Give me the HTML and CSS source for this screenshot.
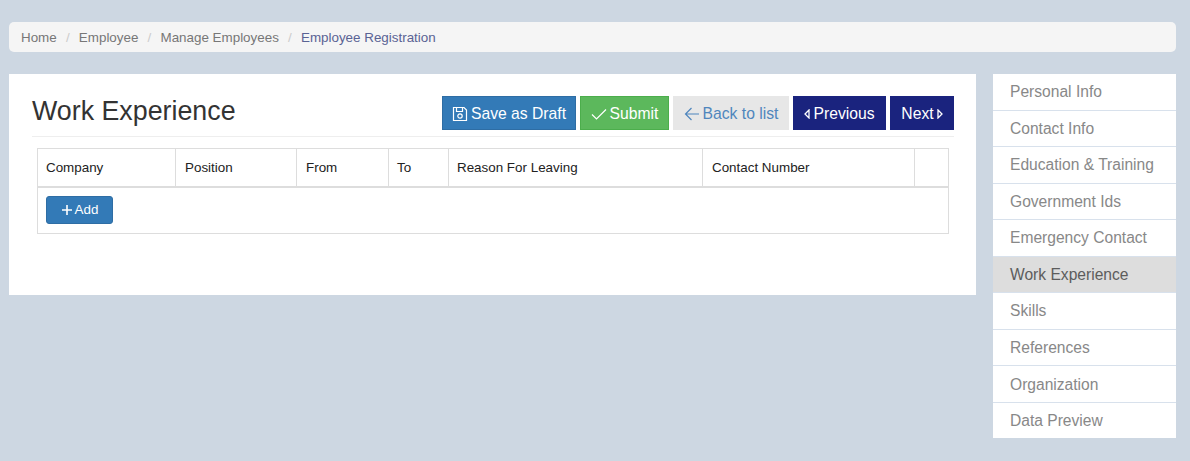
FILE: index.html
```html
<!DOCTYPE html>
<html lang="en">
<head>
    <meta charset="UTF-8">
    <meta name="viewport" content="width=device-width, initial-scale=1.0">
    <title>Employee Registration</title>
    <link rel="stylesheet" href="styles.css">
</head>
<body>

    <!-- Breadcrumb -->
    <ol class="breadcrumb">
        <li>Home</li>
        <li>Employee</li>
        <li>Manage Employees</li>
        <li class="current">Employee Registration</li>
    </ol>

    <div class="layout">
        <main class="panel">
            <div class="panel-head">
                <h1>Work Experience</h1>
                <div class="actions">
                    <button class="btn btn-blue">
                        <svg class="icon" viewBox="0 0 16 16"><path d="M1.5 1.5h10.5l2.5 2.5v10.5h-13z M4.5 1.5v4h6v-4"/><circle cx="8" cy="10" r="2.2"/></svg>
                        Save as Draft
                    </button>
                    <button class="btn btn-green">
                        <svg class="icon" viewBox="0 0 16 16"><path d="M1 8.5l4.5 4.5L15 3.5"/></svg>
                        Submit
                    </button>
                    <button class="btn btn-grey">
                        <svg class="icon" viewBox="0 0 16 16"><path d="M15 8H1.5M7.5 2L1.5 8l6 6"/></svg>
                        Back to list
                    </button>
                    <button class="btn btn-navy btn-prev">
                        <svg class="arrow" viewBox="0 0 6 10"><path d="M5 1L1 5l4 4z"/></svg>
                        Previous
                    </button>
                    <button class="btn btn-navy btn-next">
                        Next
                        <svg class="arrow" viewBox="0 0 6 10"><path d="M1 1l4 4-4 4z"/></svg>
                    </button>
                </div>
            </div>

            <table class="grid">
                <thead>
                    <tr>
                        <th class="col-company">Company</th>
                        <th class="col-position">Position</th>
                        <th class="col-from">From</th>
                        <th class="col-to">To</th>
                        <th class="col-reason">Reason For Leaving</th>
                        <th class="col-contact">Contact Number</th>
                        <th></th>
                    </tr>
                </thead>
                <tbody>
                    <tr>
                        <td colspan="7">
                            <button class="btn-add">
                                <svg class="plus" viewBox="0 0 12 12"><path d="M6 1v10M1 6h10"/></svg>
                                Add
                            </button>
                        </td>
                    </tr>
                </tbody>
            </table>
        </main>

        <!-- Steps -->
        <nav class="steps">
            <a>Personal Info</a>
            <a>Contact Info</a>
            <a>Education &amp; Training</a>
            <a>Government Ids</a>
            <a>Emergency Contact</a>
            <a class="active">Work Experience</a>
            <a>Skills</a>
            <a>References</a>
            <a>Organization</a>
            <a>Data Preview</a>
        </nav>
    </div>

</body>
</html>
```

FILE: styles.css
```css
* {
    box-sizing: border-box;
}

body {
    margin: 0;
    padding: 22px 14px 0 9px;
    background: #cdd7e2;
    font-family: "Liberation Sans", Arial, sans-serif;
    color: #333;
}

/* Breadcrumb */
.breadcrumb {
    display: flex;
    align-items: center;
    height: 30px;
    margin: 0 0 22px;
    padding: 0 12px;
    list-style: none;
    background: #f5f5f5;
    border-radius: 5px;
    font-size: 13.4px;
    color: #777;
}

.breadcrumb li + li::before {
    content: "/";
    padding: 0 9.2px;
    color: #ccc;
}

.breadcrumb .current {
    color: #5a6394;
}

.layout {
    display: flex;
    align-items: flex-start;
    gap: 17px;
}

/* Main panel */
.panel {
    width: 967px;
    height: 221px;
    padding: 22px 22px 0 23px;
    background: #fff;
}

.panel-head {
    display: flex;
    justify-content: space-between;
    height: 41px;
    border-bottom: 1px solid #eee;
}

h1 {
    margin: 0;
    padding-top: 1px;
    font-size: 26.8px;
    font-weight: 400;
    line-height: 29px;
}

.actions {
    display: flex;
    gap: 4px;
}

.btn {
    display: flex;
    align-items: center;
    justify-content: center;
    gap: 3px;
    height: 34px;
    padding: 1px 0 0;
    border: 1px solid transparent;
    font-family: inherit;
    font-size: 15.7px;
    white-space: nowrap;
    color: #fff;
}

.btn-blue {
    width: 134px;
    background: #337ab7;
    border-color: #2e6da4;
}

.btn-green {
    width: 89px;
    background: #5cb85c;
    border-color: #4cae4c;
}

.btn-grey {
    width: 116px;
    background: #e7e7e7;
    color: #4f86bd;
}

.btn-navy {
    background: #1a237e;
}

.btn-prev {
    width: 93px;
}

.btn-next {
    width: 64px;
}

.icon {
    width: 16px;
    height: 16px;
    fill: none;
    stroke: currentColor;
    stroke-width: 1.2;
}

.arrow {
    width: 6px;
    height: 10px;
    fill: none;
    stroke: currentColor;
    stroke-width: 1.3;
}

/* Table */
.grid {
    width: 912px;
    margin: 11px 0 0 5px;
    border: 1px solid #ddd;
    border-collapse: collapse;
    table-layout: fixed;
    font-size: 13.4px;
}

.grid th {
    height: 38px;
    padding: 0 9px;
    border: 1px solid #ddd;
    border-bottom-width: 2px;
    font-weight: 400;
    text-align: left;
    color: #222;
}

.grid .col-company,
.grid .col-to,
.grid .col-reason {
    padding-left: 8px;
}

.grid td {
    height: 47px;
    padding: 0 8px 1px;
}

.col-company { width: 138px; }
.col-position { width: 121px; }
.col-from { width: 92px; }
.col-to { width: 60px; }
.col-reason { width: 254px; }
.col-contact { width: 212px; }

.btn-add {
    display: flex;
    align-items: center;
    justify-content: center;
    gap: 2px;
    width: 67px;
    height: 28px;
    padding: 0;
    background: #337ab7;
    border: 1px solid #2e6da4;
    border-radius: 3px;
    font-family: inherit;
    font-size: 13.4px;
    color: #fff;
}

.plus {
    width: 12px;
    height: 12px;
    fill: none;
    stroke: currentColor;
    stroke-width: 1.6;
}

/* Side steps */
.steps {
    display: flex;
    flex-direction: column;
    width: 183px;
}

.steps a {
    display: flex;
    align-items: center;
    height: 36.55px;
    padding: 0.8px 0 0 17px;
    background: #fff;
    border-bottom: 1px solid #d8e1ec;
    font-size: 15.6px;
    color: #888;
}

.steps a:last-child {
    height: 35px;
    border-bottom: 0;
}

.steps .active {
    background: #ddd;
    color: #5c5c5c;
}
```
